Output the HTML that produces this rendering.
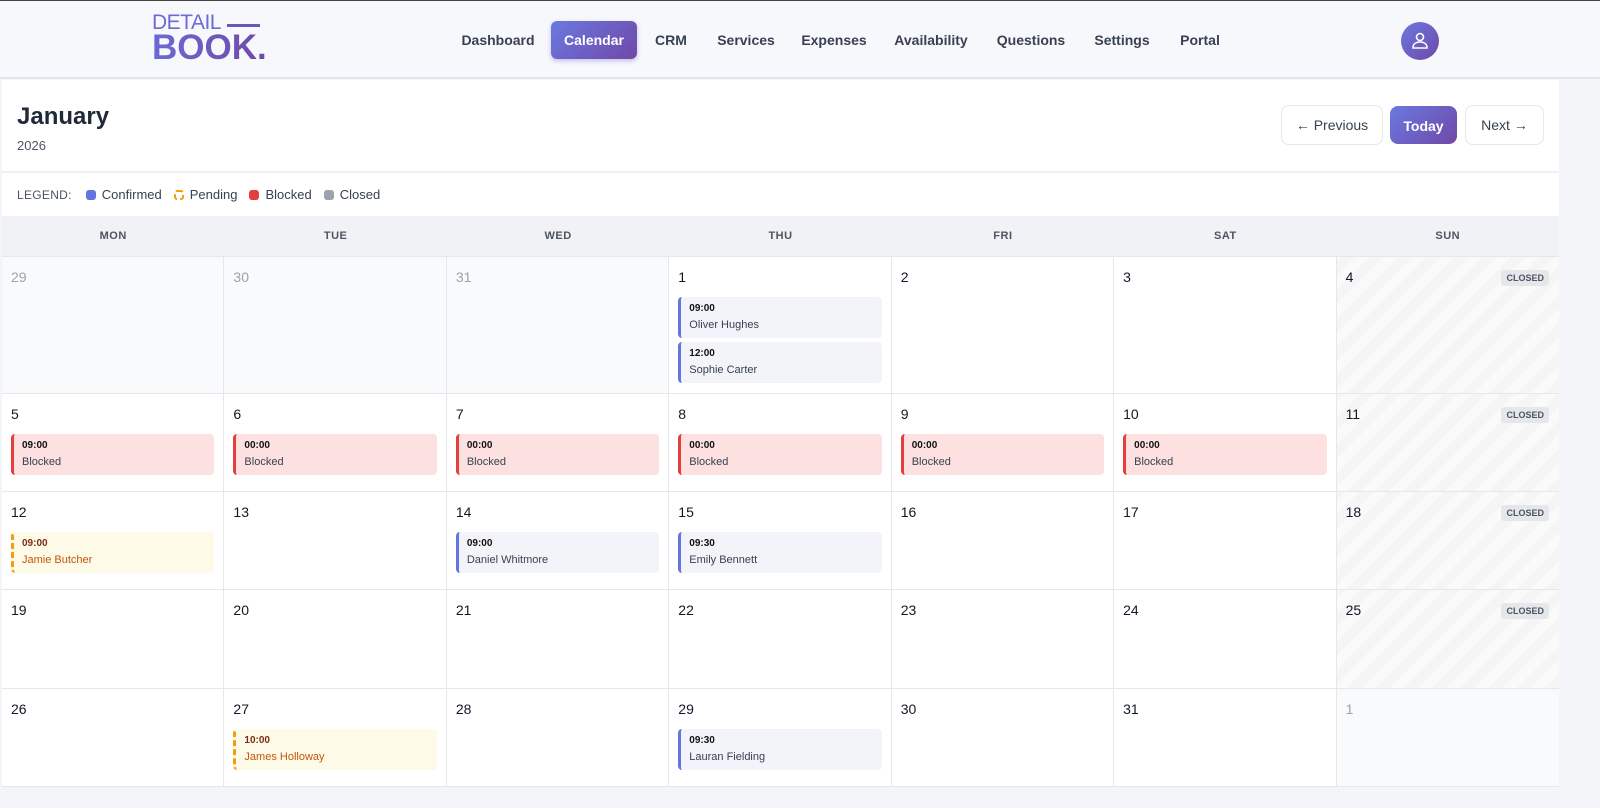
<!DOCTYPE html>
<html><head><meta charset="utf-8"><style>
*{box-sizing:border-box;margin:0;padding:0}
body{width:1600px;height:808px;background:#f4f5f9;font-family:"Liberation Sans",sans-serif;color:#1f2937;position:relative;overflow:hidden}
.top{position:absolute;left:0;top:0;width:1600px;height:79px;background:#f7f8fc;border-top:1px solid #444;border-bottom:2px solid #e3e5ec}
.logo{position:absolute;left:152px;top:12px;color:#6a5fd0}
.logo .d{font-size:21px;letter-spacing:-.5px;line-height:20px;color:#6b6ad6}
.logo .bar{position:absolute;left:75px;top:11px;width:33px;height:3px;background:#6e55b8}
.logo .b{font-size:35px;font-weight:bold;line-height:30px;background:linear-gradient(90deg,#6b6ad6,#7048a8);-webkit-background-clip:text;color:transparent}
.nav span{position:absolute;top:20px;height:38px;line-height:38px;border-radius:6px;font-size:14px;font-weight:bold;color:#374151;transform:translateX(-50%);white-space:nowrap}
.nav .act{background:linear-gradient(135deg,#6a79e0,#7048a8);color:#fff;box-shadow:0 2px 5px rgba(100,80,200,.35);width:86px;text-align:center}
.av{position:absolute;left:1401px;top:21px;width:38px;height:38px;border-radius:50%;background:linear-gradient(135deg,#6a79e0,#7048a8)}
.main{position:absolute;left:2px;top:80px;width:1557px;height:707px;background:#fff}
h1{position:absolute;left:15px;top:23px;font-size:24px;font-weight:bold;color:#1f2937}
.yr{position:absolute;left:15px;top:58px;font-size:13px;color:#4b5563}
.btn{position:absolute;top:25px;height:40px;line-height:38px;border:1px solid #e5e7eb;border-radius:8px;font-size:14px;text-align:center;color:#374151;background:#fff}
.btn.t{background:linear-gradient(135deg,#6a79e0,#7048a8);color:#fff;border:none;line-height:40px;font-weight:bold;top:26px;height:38px}
.leg{position:absolute;left:0;top:91px;width:100%;height:45px;border-top:2px solid #eef0f3;font-size:13px;color:#374151;display:flex;align-items:center;padding-left:15px}
.leg .l{font-size:12px;color:#4b5563;margin-right:14px;letter-spacing:.3px}
.dot{width:10px;height:10px;border-radius:3px;display:inline-block;margin-right:6px}
.leg b{font-weight:normal;margin-right:12px;display:flex;align-items:center}
.grid{position:absolute;left:0;top:136px;width:1557px;display:grid;grid-template-columns:repeat(7,1fr);grid-template-rows:41px 137px 98px 98px 99px 98px}
.h{background:#f1f2f5;border-bottom:1px solid #e5e7eb;font-size:11px;font-weight:bold;color:#4b5563;text-align:center;line-height:41px;letter-spacing:.5px}
.c{border-right:1px solid #e5e7eb;border-bottom:1px solid #e5e7eb;position:relative;padding:12px 9px 0 9px;font-size:14px}
.c:nth-child(7n){border-right:none}
.c .n{height:28px;color:#111827}
.o{background:#f9fafb}.o .n{color:#9ca3af}
.cl{background:repeating-linear-gradient(-45deg,#f5f5f6 0 10px,#fafafa 10px 20px)}
.tag{position:absolute;right:10px;top:13px;background:#e5e7eb;color:#4b5563;font-size:9px;font-weight:bold;padding:3px 5px;border-radius:3px}
.e{height:41px;border-radius:4px;margin-bottom:4px;padding:6px 0 0 8px;font-size:11px;color:#374151;border-left:3px solid #6474e0;background:#f3f4fa}
.e i{font-style:normal;font-weight:bold;font-size:10px;display:block;color:#111;margin-bottom:5px}
.e.b{background:#fde0e0;border-left-color:#e53e3e}
.e.p{background:#fefae8;border-left:3px dashed #f59e0b;color:#c2570c}
.e.p i{color:#7c2d12}
</style></head><body>
<div class="top">
<div class="logo"><div class="d">DETAIL</div><div class="bar"></div><div class="b">BOOK.</div></div>
<div class="nav"><span style="left:498px">Dashboard</span><span class="act" style="left:594px">Calendar</span><span style="left:671px">CRM</span><span style="left:746px">Services</span><span style="left:834px">Expenses</span><span style="left:931px">Availability</span><span style="left:1031px">Questions</span><span style="left:1122px">Settings</span><span style="left:1200px">Portal</span></div>
<div class="av"><svg width="38" height="38" viewBox="0 0 38 38" fill="none" stroke="#fff" stroke-width="1.6"><circle cx="19" cy="15" r="3.5"/><path d="M12 26c0-4 3-6 7-6s7 2 7 6z"/></svg></div>
</div>
<div class="main">
<h1>January</h1><div class="yr">2026</div>
<div class="btn" style="left:1279px;width:102px">← Previous</div>
<div class="btn t" style="left:1388px;width:67px">Today</div>
<div class="btn" style="left:1463px;width:79px">Next →</div>
<div class="leg"><span class="l">LEGEND:</span><b><span class="dot" style="background:#6474e0"></span>Confirmed</b><b><span class="dot" style="border:2px dashed #f59e0b"></span>Pending</b><b><span class="dot" style="background:#e53e3e"></span>Blocked</b><b><span class="dot" style="background:#9ca3af"></span>Closed</b></div>
<div class="grid">
<div class="h">MON</div><div class="h">TUE</div><div class="h">WED</div><div class="h">THU</div><div class="h">FRI</div><div class="h">SAT</div><div class="h">SUN</div>
<div class="c o"><div class="n">29</div></div><div class="c o"><div class="n">30</div></div><div class="c o"><div class="n">31</div></div>
<div class="c"><div class="n">1</div><div class="e"><i>09:00</i>Oliver Hughes</div><div class="e"><i>12:00</i>Sophie Carter</div></div>
<div class="c"><div class="n">2</div></div><div class="c"><div class="n">3</div></div>
<div class="c cl"><div class="n">4</div><span class="tag">CLOSED</span></div>
<div class="c"><div class="n">5</div><div class="e b"><i>09:00</i>Blocked</div></div>
<div class="c"><div class="n">6</div><div class="e b"><i>00:00</i>Blocked</div></div>
<div class="c"><div class="n">7</div><div class="e b"><i>00:00</i>Blocked</div></div>
<div class="c"><div class="n">8</div><div class="e b"><i>00:00</i>Blocked</div></div>
<div class="c"><div class="n">9</div><div class="e b"><i>00:00</i>Blocked</div></div>
<div class="c"><div class="n">10</div><div class="e b"><i>00:00</i>Blocked</div></div>
<div class="c cl"><div class="n">11</div><span class="tag">CLOSED</span></div>
<div class="c"><div class="n">12</div><div class="e p"><i>09:00</i>Jamie Butcher</div></div>
<div class="c"><div class="n">13</div></div>
<div class="c"><div class="n">14</div><div class="e"><i>09:00</i>Daniel Whitmore</div></div>
<div class="c"><div class="n">15</div><div class="e"><i>09:30</i>Emily Bennett</div></div>
<div class="c"><div class="n">16</div></div><div class="c"><div class="n">17</div></div>
<div class="c cl"><div class="n">18</div><span class="tag">CLOSED</span></div>
<div class="c"><div class="n">19</div></div><div class="c"><div class="n">20</div></div><div class="c"><div class="n">21</div></div><div class="c"><div class="n">22</div></div><div class="c"><div class="n">23</div></div><div class="c"><div class="n">24</div></div>
<div class="c cl"><div class="n">25</div><span class="tag">CLOSED</span></div>
<div class="c"><div class="n">26</div></div>
<div class="c"><div class="n">27</div><div class="e p"><i>10:00</i>James Holloway</div></div>
<div class="c"><div class="n">28</div></div>
<div class="c"><div class="n">29</div><div class="e"><i>09:30</i>Lauran Fielding</div></div>
<div class="c"><div class="n">30</div></div><div class="c"><div class="n">31</div></div>
<div class="c o"><div class="n">1</div></div>
</div>
</div>
</body></html>
